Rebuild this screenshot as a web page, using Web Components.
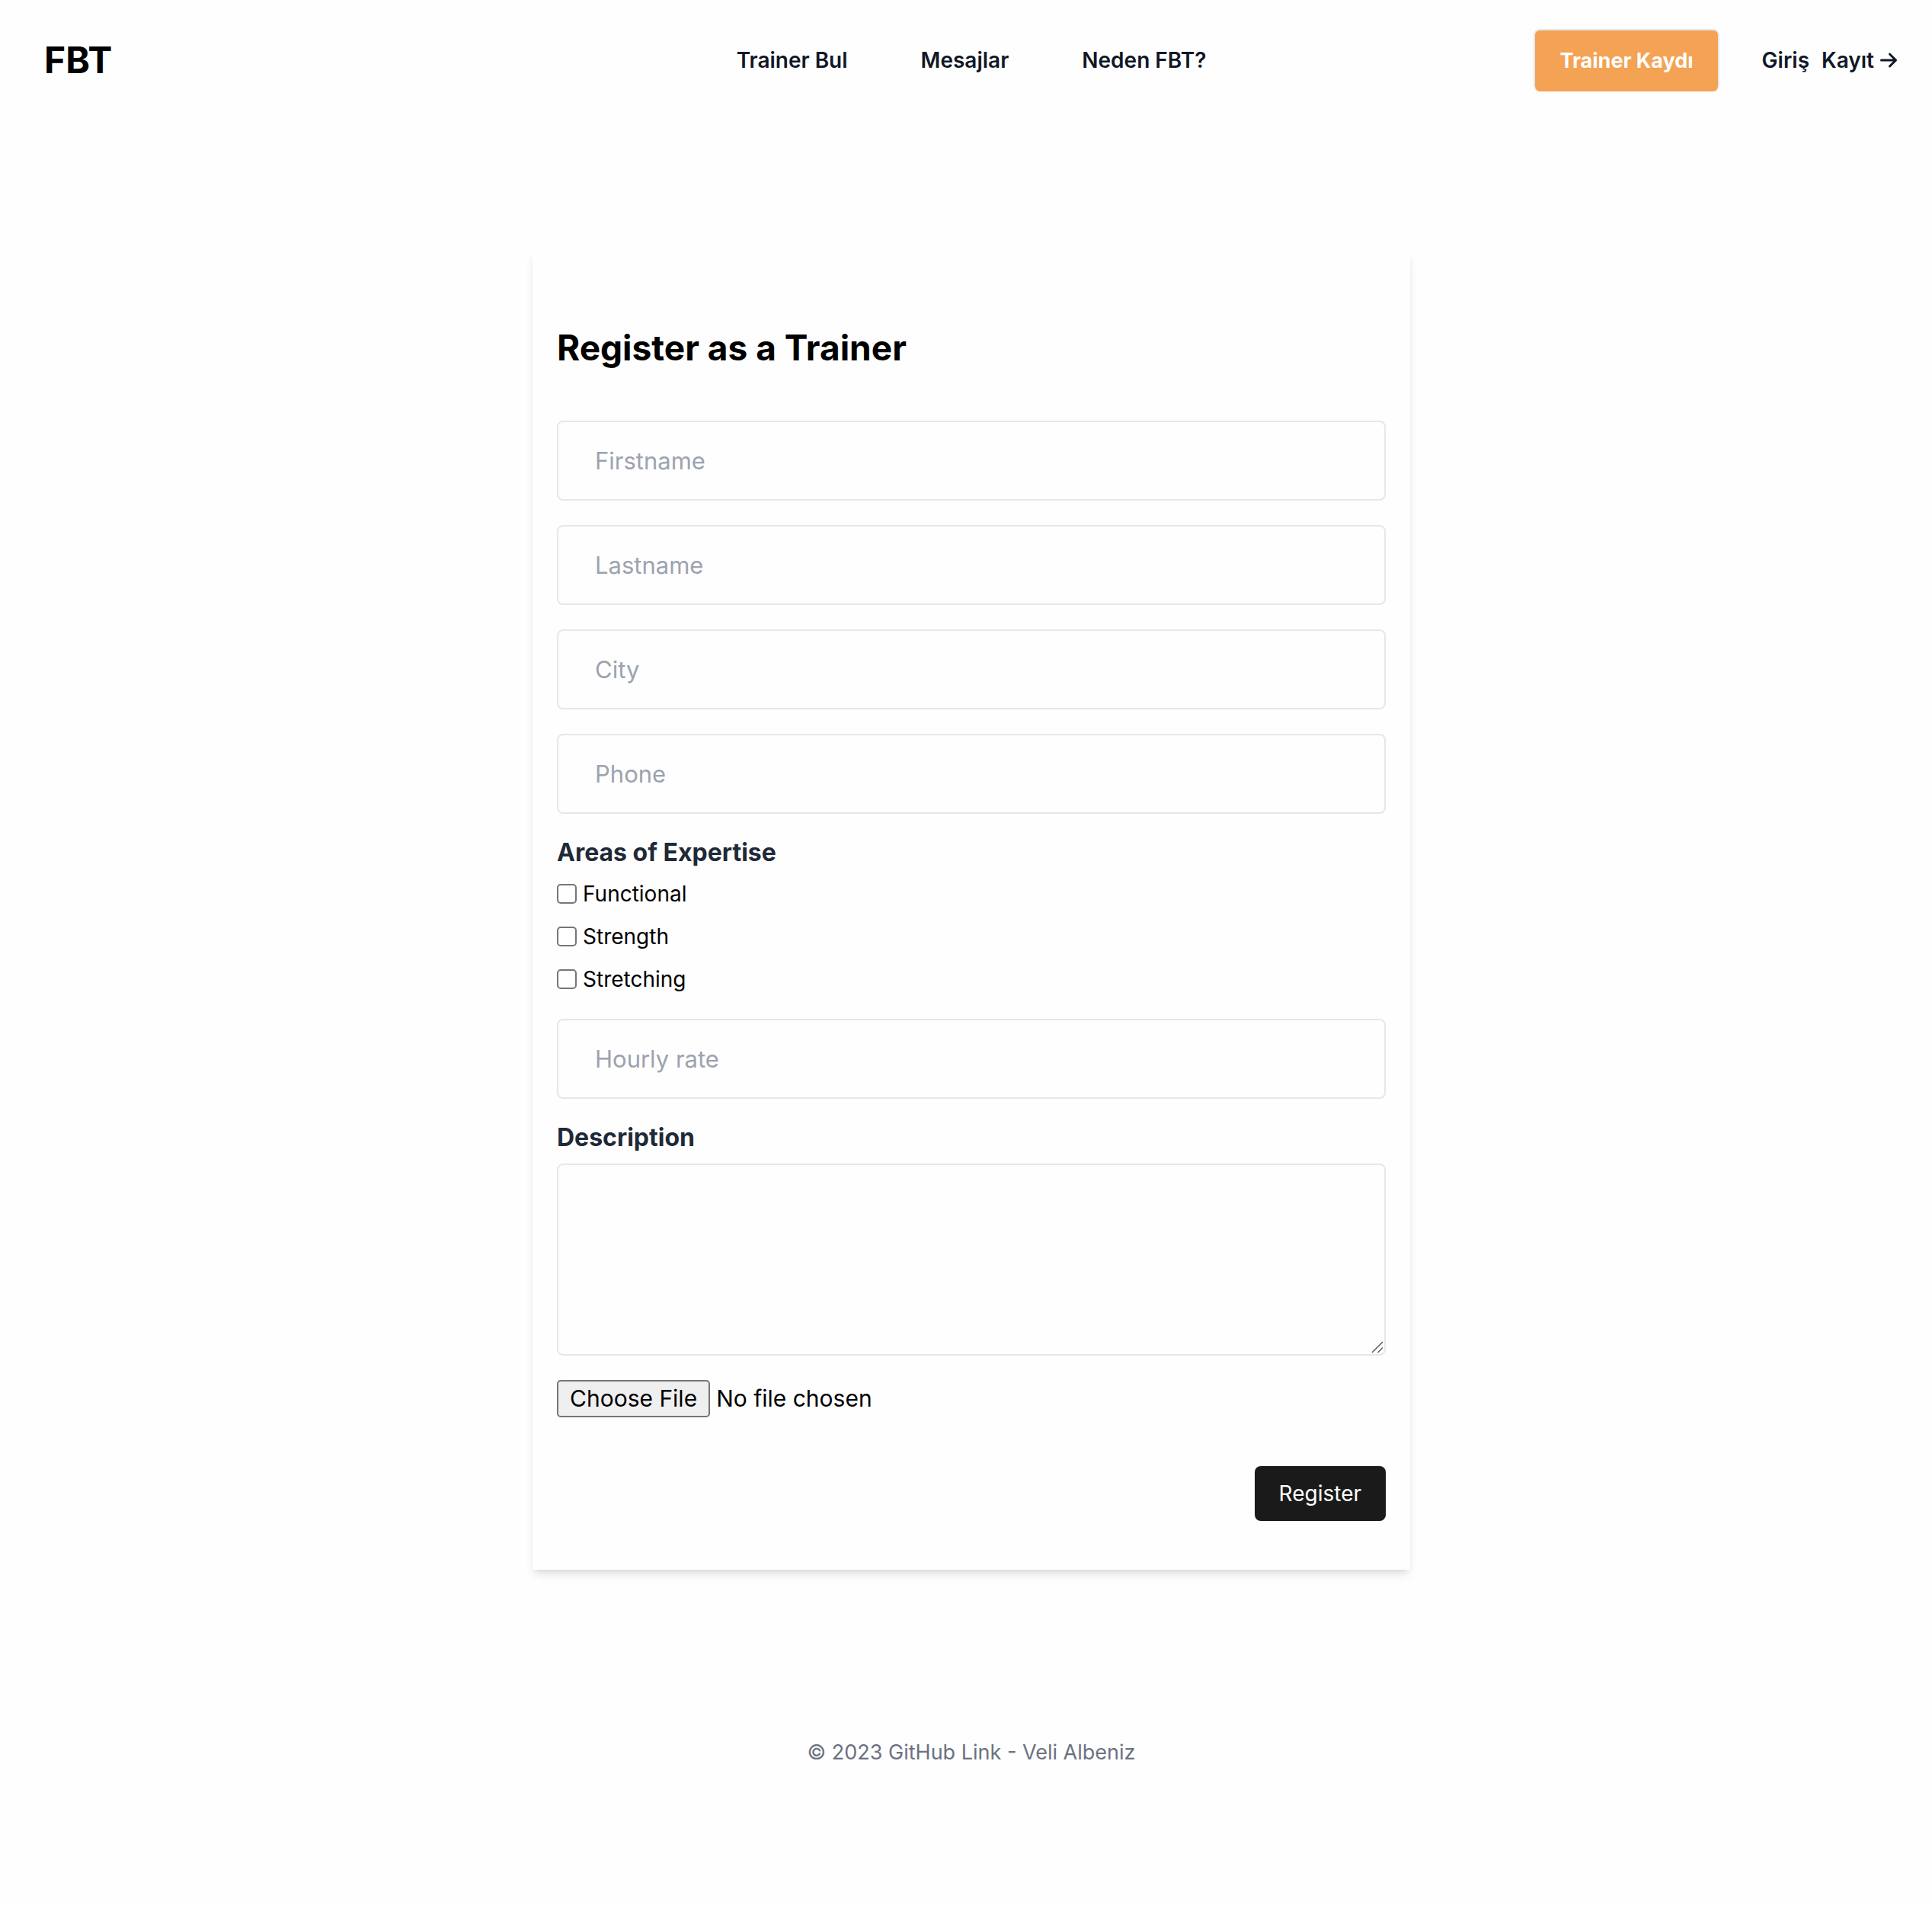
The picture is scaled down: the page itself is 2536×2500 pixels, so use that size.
<!DOCTYPE html>
<html lang="tr">
<head>
<meta charset="utf-8">
<title>FBT</title>
<style>
  html { background: #fefefe; }
  body {
    margin: 0;
    padding-left: 14px;
    font-family: Inter, "Liberation Sans", sans-serif;
    font-size: 28px;
    line-height: 40px;
    color: #000;
  }
</style>
</head>
<body>
<fbt-page>
  <fbt-header slot="header"></fbt-header>
  <trainer-form></trainer-form>
  <fbt-footer slot="footer">© 2023 GitHub Link - Veli Albeniz</fbt-footer>
</fbt-page>

<script>
const define = (name, html, setup) => {
  const template = document.createElement('template');
  template.innerHTML = '<style>*{box-sizing:border-box}</style>' + html;
  customElements.define(name, class extends HTMLElement {
    constructor() {
      super();
      this.attachShadow({ mode: 'open' }).append(template.content.cloneNode(true));
    }
    connectedCallback() { if (setup) setup(this, this.shadowRoot); }
  });
};

define('fbt-page', `
  <style>
    :host { display: flex; flex-direction: column; }
    main { display: flex; justify-content: center; padding: 168px 32px 0; }
    ::slotted(trainer-form) { flex: 0 1 1152px; }
  </style>
  <slot name="header"></slot>
  <main><slot></slot></main>
  <slot name="footer"></slot>`);

define('fbt-header', `
  <style>
    :host { display: block; }
    header { display: flex; align-items: center; padding: 38px 44px 40px; font-weight: 600; color: #111827; }
    a { color: inherit; text-decoration: none; white-space: nowrap; }
    .side { flex: 1 1 0; display: flex; align-items: center; }
    .logo { font-size: 48px; font-weight: 700; line-height: 64px; color: #000; }
    nav { display: flex; gap: 96px; }
    .end { justify-content: flex-end; gap: 56px; }
    .cta { border: 2px solid #e5e7eb; border-bottom: 0; border-radius: 8px; padding: 20px 32px; background: #f4a254; color: #fff; font-size: 27px; font-weight: 700; }
    .auth { display: flex; gap: 16px; }
    .join { display: flex; align-items: center; gap: 8px; }
    svg { display: block; width: 24px; height: 24px; fill: none; stroke: currentColor; stroke-width: 3; stroke-linecap: round; stroke-linejoin: round; }
  </style>
  <header>
    <div class="side"><a class="logo" href="#">FBT</a></div>
    <nav>
      <a href="#trainers">Trainer Bul</a>
      <a href="#messages">Mesajlar</a>
      <a href="#why">Neden FBT?</a>
    </nav>
    <div class="side end">
      <a class="cta" href="#register">Trainer Kaydı</a>
      <div class="auth">
        <a href="#login">Giriş</a>
        <a class="join" href="#signup">Kayıt
          <svg viewBox="0 0 24 24" aria-hidden="true"><path d="M1.500 12H20.500M12.500 4L20.500 12L12.500 20"/></svg>
        </a>
      </div>
    </div>
  </header>`);

const fieldStyle = `
  :host { display: block; }
  label { display: block; margin-bottom: 16px; font-size: 32px; font-weight: 700; line-height: 37px; color: #1f2937; }
  input, textarea {
    display: block; width: 100%; margin: 0; border: 2px solid #e5e7eb; border-radius: 8px;
    padding: 32px 48px; background: transparent; color: #000; font: inherit; font-size: 31px; line-height: 37px;
  }
  input { height: 105px; }
  ::placeholder { color: #9ca3af; opacity: 1; }`;

define('text-field', `
  <style>${fieldStyle}</style>
  <input type="text">`, (host, root) => {
  const input = root.querySelector('input');
  input.placeholder = host.getAttribute('name');
  input.setAttribute('aria-label', host.getAttribute('name'));
});

define('text-area-field', `
  <style>${fieldStyle}
    .box { position: relative; }
    textarea { height: 252px; resize: vertical; }
    textarea::-webkit-resizer { display: none; }
    svg { position: absolute; right: 3px; bottom: 3px; width: 16px; height: 16px; pointer-events: none; fill: none; stroke: #5a5a5a; stroke-width: 1.500; }
  </style>
  <label for="text"><slot></slot></label>
  <div class="box">
    <textarea id="text"></textarea>
    <svg viewBox="0 0 16 16" aria-hidden="true"><path d="M1 15L15 1M8.500 15L15 8.500"/></svg>
  </div>`);

define('check-option', `
  <style>
    :host { display: flex; }
    label { display: flex; align-items: center; gap: 8px; }
    input { appearance: none; width: 26px; height: 26px; margin: 0; border: 2px solid #767676; border-radius: 5px; background: #fff; }
    input:checked { background: #2563eb; }
  </style>
  <label><input type="checkbox"><slot></slot></label>`);

define('file-field', `
  <style>
    :host { display: block; }
    input { display: block; width: 100%; height: 49px; font: inherit; font-size: 30px; line-height: 41px; color: #000; }
    input::file-selector-button {
      height: 49px; margin: 0 8px 0 0; padding: 2px 15px; border: 2px solid #767676; border-radius: 5px;
      background: #efefef; color: #000; font: inherit;
    }
  </style>
  <input type="file" aria-label="Choose File">`);

define('trainer-form', `
  <style>
    :host { display: block; }
    form {
      display: flex; flex-direction: column; gap: 32px; padding: 96px 32px 64px;
      box-shadow: 0 8px 12px -2px rgb(0 0 0 / .1), 0 4px 8px -4px rgb(0 0 0 / .1); background: #fefefe;
    }
    h2 { margin: 0 0 32px; font-size: 46px; font-weight: 700; line-height: 64px; }
    fieldset { display: flex; flex-direction: column; gap: 16px; min-width: 0; margin: 0; border: 0; padding: 0; }
    legend { margin-bottom: 16px; padding: 0; font-size: 32px; font-weight: 700; line-height: 37px; color: #1f2937; }
    button {
      align-self: flex-end; margin-top: 32px; border: 0; border-radius: 8px; padding: 16px 32px;
      background: #1a1a1a; color: #fff; font: inherit;
    }
  </style>
  <form>
    <h2>Register as a Trainer</h2>
    <text-field name="Firstname"></text-field>
    <text-field name="Lastname"></text-field>
    <text-field name="City"></text-field>
    <text-field name="Phone"></text-field>
    <fieldset>
      <legend>Areas of Expertise</legend>
      <check-option>Functional</check-option>
      <check-option>Strength</check-option>
      <check-option>Stretching</check-option>
    </fieldset>
    <text-field name="Hourly rate"></text-field>
    <text-area-field>Description</text-area-field>
    <file-field></file-field>
    <button type="button">Register</button>
  </form>`);

define('fbt-footer', `
  <style>
    :host { display: block; }
    footer { padding: 220px 48px 160px; text-align: center; font-size: 27px; color: #6b7280; }
  </style>
  <footer><slot></slot></footer>`);
</script>
</body>
</html>
